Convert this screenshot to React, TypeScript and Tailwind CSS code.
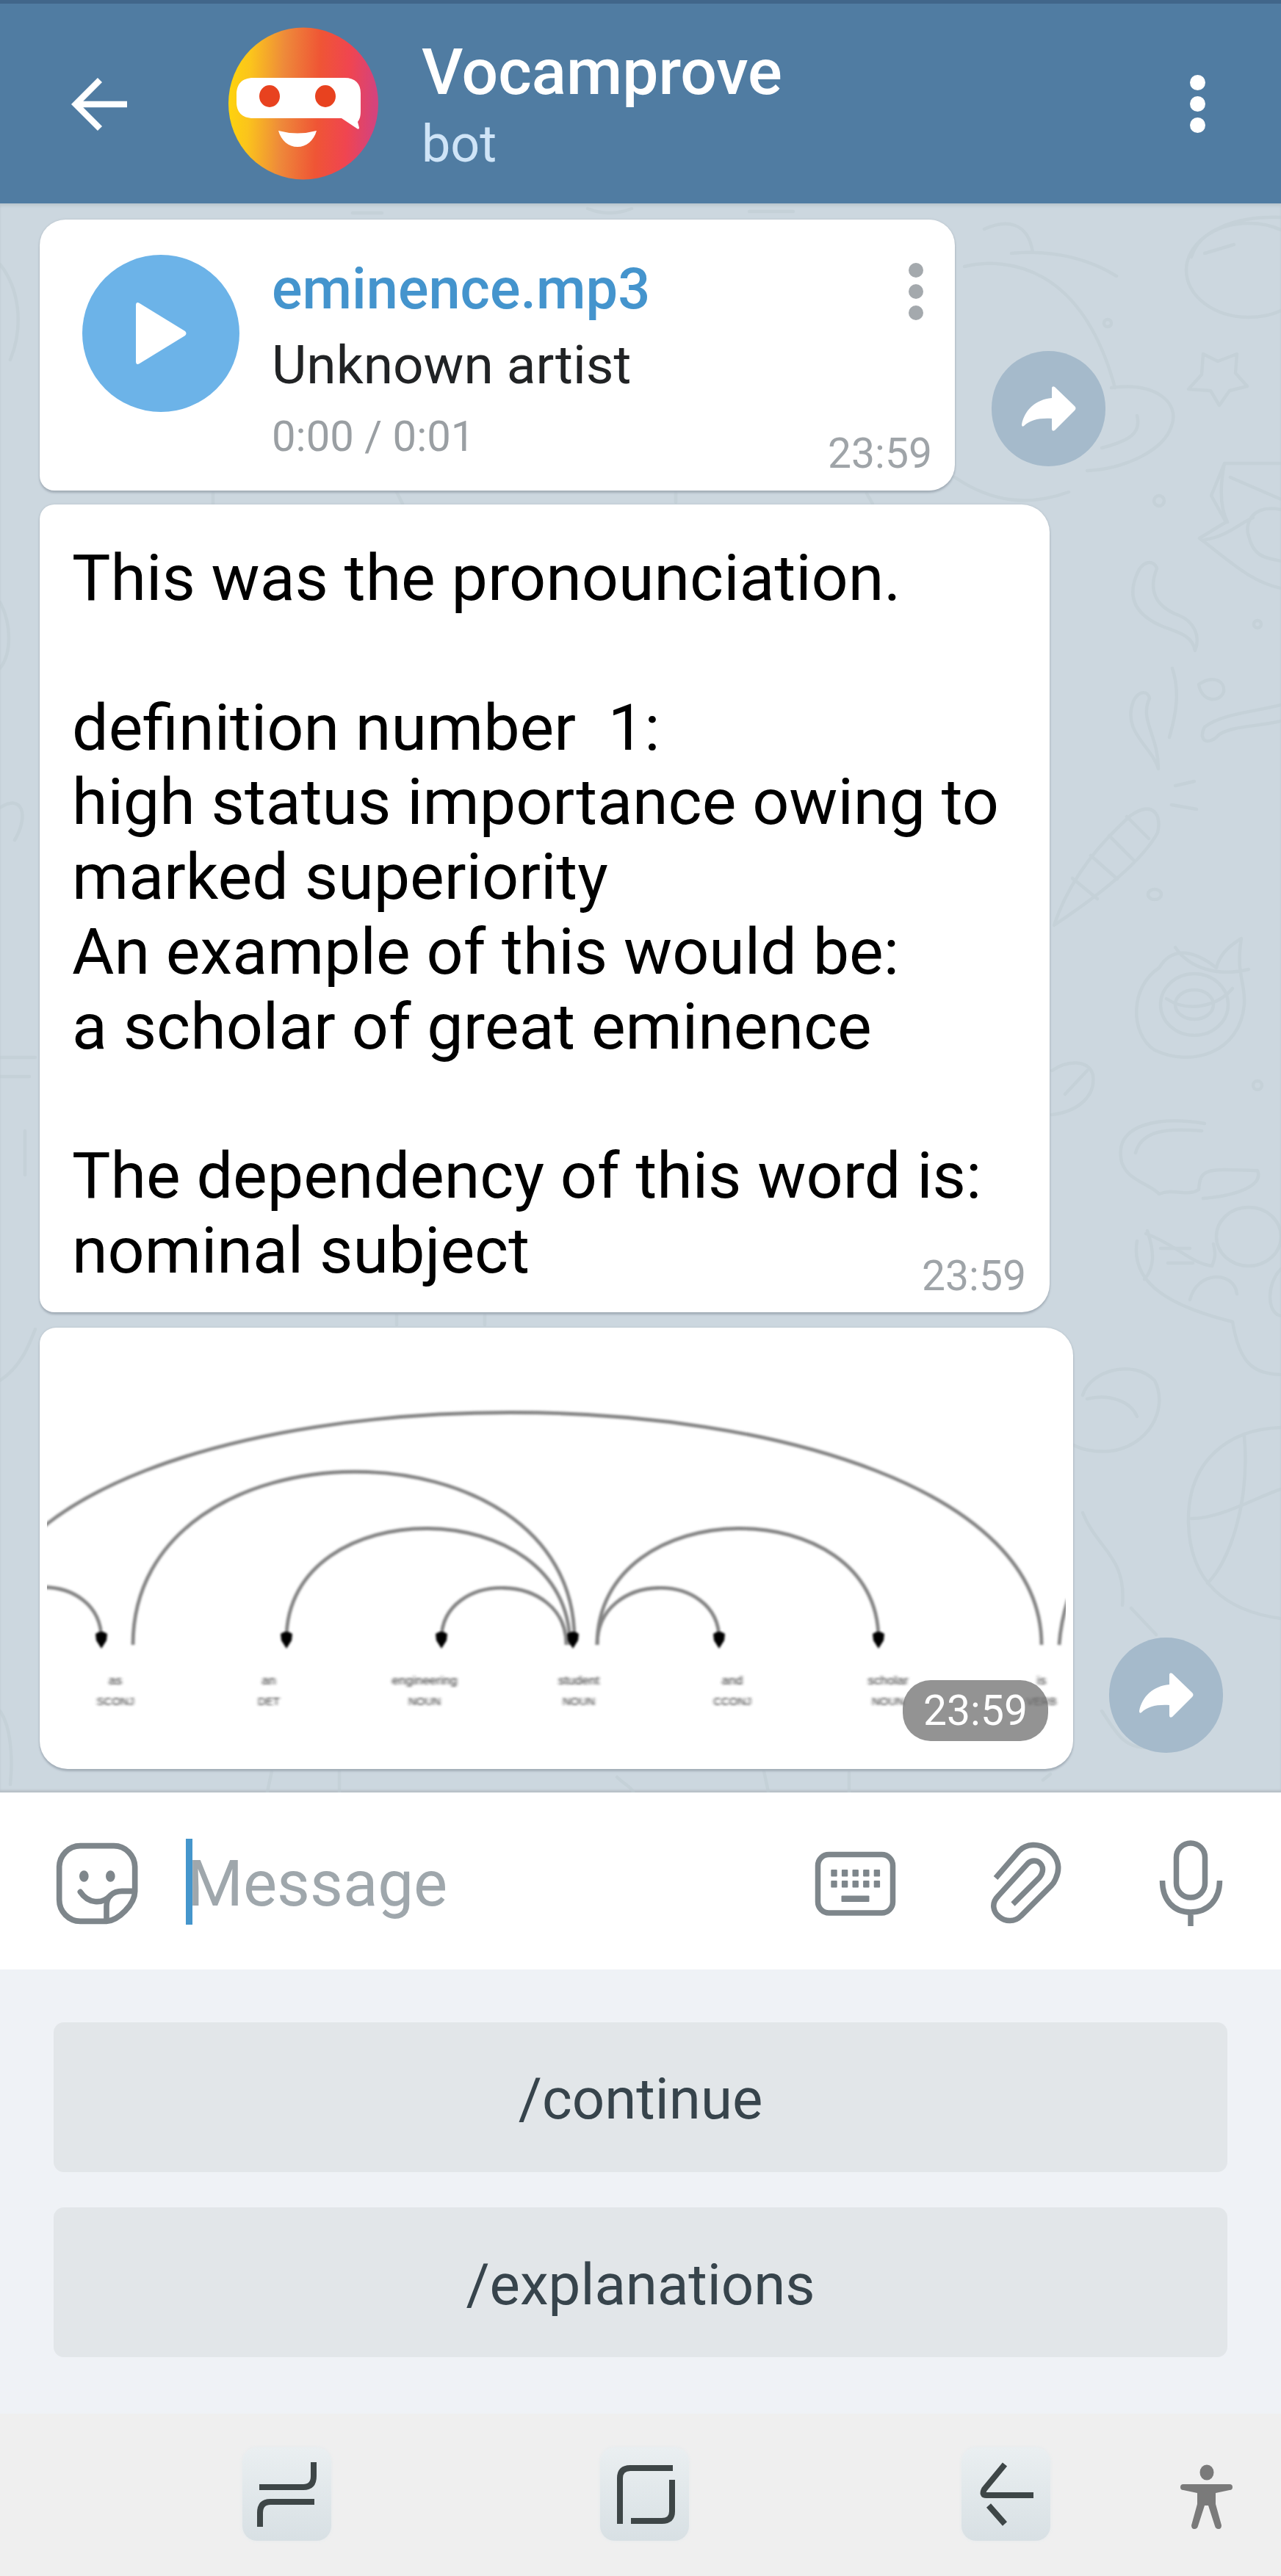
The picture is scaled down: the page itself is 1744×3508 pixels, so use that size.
import React from "react";

const definitionLines = [
  "This was the pronounciation.",
  "",
  "definition number  1:",
  "high status importance owing to",
  "marked superiority",
  "An example of this would be:",
  "a scholar of great eminence",
  "",
  "The dependency of this word is:",
  "nominal subject",
];

const words = [
  { x: 157, word: "as", tag: "SCONJ" },
  { x: 366, word: "an", tag: "DET" },
  { x: 578, word: "engineering", tag: "NOUN" },
  { x: 788, word: "student", tag: "NOUN" },
  { x: 997, word: "and", tag: "CCONJ" },
  { x: 1209, word: "scholar", tag: "NOUN" },
  { x: 1418, word: "is", tag: "VERB" },
];

const arrowHeads = [138, 390, 601, 780, 979, 1196];

function BackIcon() {
  return (
    <svg className="h-[80px] w-[84px]" viewBox="0 0 84 80" fill="none" stroke="#fff" strokeWidth="8.5">
      <path d="M42 7 9 40l33 33M10 40h69" />
    </svg>
  );
}

function Avatar() {
  return (
    <svg className="h-[208px] w-[206px]" viewBox="0 0 206 208">
      <defs>
        <linearGradient id="face" x1="0" x2="1" y1="0" y2="0.05">
          <stop offset="0" stopColor="#ffd60a" />
          <stop offset="0.16" stopColor="#fbc41c" />
          <stop offset="0.38" stopColor="#ee8a3a" />
          <stop offset="0.62" stopColor="#ef5535" />
          <stop offset="0.82" stopColor="#f04550" />
          <stop offset="1" stopColor="#d5437c" />
        </linearGradient>
      </defs>
      <ellipse cx="103" cy="104" rx="102" ry="103.5" fill="url(#face)" />
      <path
        d="M35 69h124c15 0 22 8 22 21v24c0 7-1 11-4 15l2 8c0 2-2 2-3 1l-21-14H35c-16 0-23-9-23-22V92c0-14 7-23 23-23Z"
        fill="#fff"
      />
      <ellipse cx="57" cy="94" rx="14" ry="15" fill="#e8421f" />
      <ellipse cx="133" cy="94" rx="14" ry="15" fill="#e8421f" />
      <path d="M69 141q26 7 52 0c-4 14-14 22-26 22s-22-8-26-22Z" fill="#fff" />
    </svg>
  );
}

function ForwardButton() {
  return (
    <button className="flex h-[157px] w-[155px] shrink-0 items-center justify-center rounded-full bg-[#a5bacb]">
      <svg className="h-[62px] w-[74px]" viewBox="0 0 74 62">
        <path
          d="M41 2q1-3 4-1l27 26q3 3 0 6L45 60q-4 2-4-2V44C24 43 11 46 3 54q-3 2-3-2C4 32 19 18 41 16Z"
          fill="#fff"
        />
      </svg>
    </button>
  );
}

function Wallpaper() {
  return (
    <svg
      className="absolute inset-0 h-full w-full"
      viewBox="0 277 1744 2164"
      fill="none"
      stroke="#bfccd2"
      strokeWidth="4.5"
      strokeLinecap="round"
      strokeLinejoin="round"
      opacity="0.52"
    >
      {/* Saucer with its ring */}
      <path d="M1313 363c60-14 160 0 205 165M1377 345c60-6 110 10 143 31M1340 312c30-14 60-10 66 32M1513 528c60-8 94 20 82 52-10 32-60 58-115 61M1500 610c38-10 54-20 48-44M1300 650c50 34 100 40 155 20" />
      {/* Balloon */}
      <ellipse cx="1700" cy="368" rx="85" ry="64" />
      <path d="M1622 350c10-36 60-56 122-54M1640 345l40-12" />
      <path d="m1638 482 20 10 26-10-2 26 16 18-24 6-14 20-12-20-30-2 18-20Z" />
      <circle cx="1508" cy="440" r="5" />
      <circle cx="1578" cy="682" r="7" />
      {/* Rocket */}
      <path d="M1744 631h-77l-18 44 20 36-36 22c40 30 70 60 111 68M1675 650l69 30M1667 631c-6 30-6 60 4 80M1744 694c-40-8-50 20-44 36 6 26 20 30 44 34M1640 735c30-4 50-24 66-30" />
      {/* Streamers */}
      <path d="M1547 784c8-22 24-22 28-10-12 30-2 52 30 64 20 8 30 28 22 48-4-20-20-24-42-32-40-16-50-40-38-70Z" />
      <path d="M1543 955c8-16 20-14 22-4-14 30 12 50 12 96-8-30-50-50-34-92Z" />
      <path d="M1596 910c10 30 6 60-4 94M1632 932c20-14 36-4 34 10-6 16-30 14-34-10ZM1744 960c-40 10-80 12-104 30-10 20 6 26 20 10 20-12 50-10 84-18" />
      <circle cx="1712" cy="850" r="5" />
      {/* Candy cane */}
      <path d="M1435 1260c20-60 60-110 105-150 30-20 42 0 36 24-22 40-84 88-141 126ZM1460 1196l34 28M1485 1165l36 32M1510 1138l34 34M1534 1112l30 30M1595 1096l34 6M1600 1070l26-6" />
      <ellipse cx="1572" cy="1218" rx="9" ry="7" />
      {/* Cupcake */}
      <path d="M1578 1318c-40 26-40 90-6 112 50 24 116 4 122-62 2-30-12-42-4-90-20 12-30 24-34 40-30-24-60-30-78 0ZM1600 1290c20 30 60 40 100 30M1588 1360c30 20 70 10 90-14" />
      <ellipse cx="1626" cy="1368" rx="26" ry="20" />
      <ellipse cx="1626" cy="1368" rx="46" ry="42" />
      <path d="M1432 1458c20-14 50-16 56 6 4 30-22 50-56 54M1450 1490l30-32" />
      <circle cx="1712" cy="1478" r="6" />
      {/* Elephant */}
      <path d="M1640 1530c-60-10-120 0-114 46 2 30 40 36 52 50 20-8 40 4 54-6 2-30 10-28 80-26 8 20-26 34-74 38M1546 1570c8-30 40-34 90-30" />
      <path d="M1548 1690c-10 60 50 90 130 110 10 60 30 70 66 72M1562 1676c10 30 10 50-4 66M1560 1680c40 14 60 40 90 44 6-14 4-20 2-30M1620 1770c10-40 60-40 64-8M1744 1728c-20 20-20 60 0 64" />
      <ellipse cx="1700" cy="1684" rx="44" ry="40" />
      <path d="M1580 1700h40M1590 1720h34" />
      {/* Ball */}
      <path d="M1474 1900c10-34 70-50 98-20 20 40-10 90-60 96-20 2-40-2-50-8M1480 1905c30-8 60 4 68 24" />
      <path d="M1744 1944c-70 2-128 44-126 130 2 80 50 120 126 130M1694 1956c8 90-20 170-50 200M1622 2068c40 0 90-30 122-40" />
      <path d="M1474 2060c20 50 60 60 54 126M1540 2190l34 36M1500 2330c20 30 30 50 60 50" />
      {/* Left margin */}
      <path d="M0 360c24 30 34 80 14 130M0 820c16 30 16 70 0 90M0 1100c30-20 40 10 20 44M0 1440h48M0 1466h40M34 1540v60M0 1880c30-20 40-50 48-70M0 2330c14 20 18 60 14 100" />
      {/* Gaps between the bubbles */}
      <path d="M290 670v16M540 670l8 16M920 670v14M1180 672l8 14M540 1790v14M660 1790v14M370 2412l-6 28M462 2412v28M840 2420c10 10 20 14 22 20M1040 2412l6 28M1156 2414v26M1420 2424l10-8" />
      <path d="M480 290h40M800 284c20 8 40 8 60 0M1020 288h60" />
    </svg>
  );
}

function DependencyChart() {
  return (
    <svg className="h-[601px] w-[1387px]" viewBox="64 1808 1387 601" fill="none">
      <defs>
        <filter id="soft" x="-5%" y="-5%" width="110%" height="110%">
          <feGaussianBlur stdDeviation="1.4" />
        </filter>
        <filter id="softText" x="-5%" y="-50%" width="110%" height="200%">
          <feGaussianBlur stdDeviation="2.2 1.8" />
        </filter>
      </defs>
      <g stroke="#838383" strokeWidth="4.8" filter="url(#soft)">
        <path d="M-28 2240C-28 1818 1418 1818 1418 2240" />
        <path d="M181 2240C181 1927 782 1927 782 2232" />
        <path d="M390 2232C390 2030 776 2030 776 2240" />
        <path d="M601 2232C601 2138 771 2138 771 2240" />
        <path d="M813 2240C813 2138 979 2138 979 2232" />
        <path d="M813 2240C813 2030 1196 2030 1196 2232" />
        <path d="M-20 2232C-20 2138 138 2138 138 2232" />
        <path d="M1442 2240q2-30 12-62" />
      </g>
      <g fill="#000" filter="url(#soft)">
        {arrowHeads.map((x) => (
          <path key={x} d={`M${x - 8} 2225q8-6 16 0l-1 9-7 11-7-11Z`} />
        ))}
      </g>
      <g
        fill="#2e2e2e"
        fontFamily="Liberation Sans"
        textAnchor="middle"
        filter="url(#softText)"
      >
        {words.map((w) => (
          <React.Fragment key={w.x}>
            <text x={w.x} y="2294" fontSize="17">
              {w.word}
            </text>
            <text x={w.x} y="2322" fontSize="15">
              {w.tag}
            </text>
          </React.Fragment>
        ))}
      </g>
    </svg>
  );
}

function StickerIcon() {
  return (
    <svg className="h-[114px] w-[115px]" viewBox="102 85 345 342" fill="none" stroke="#7e868b" strokeWidth="23">
      <path d="M428 288V190a86 88 0 0 0-86-88H205a86 88 0 0 0-86 88v132a86 88 0 0 0 86 88h107C360 408 428 340 428 288Z" />
      <path d="M312 408v-60c0-40 28-61 63-61h53" />
      <path d="M205 290c32 48 88 52 122 16" strokeLinecap="round" />
      <ellipse cx="220" cy="226" rx="19" ry="23" fill="#7e868b" stroke="none" />
      <ellipse cx="328" cy="226" rx="19" ry="23" fill="#7e868b" stroke="none" />
    </svg>
  );
}

function KeyboardIcon() {
  return (
    <svg className="h-[88px] w-[111px]" viewBox="1109.5 2521 111 88">
      <rect x="1114" y="2525.5" width="102" height="79.5" rx="15" fill="none" stroke="#7e868b" strokeWidth="7.5" />
      <g fill="#7e868b">
        {[1136, 1150.6, 1165.2, 1179.8, 1194.4].map((x) => (
          <React.Fragment key={x}>
            <rect x={x - 4.2} y="2546" width="8.4" height="9.5" rx="1" />
            <rect x={x - 4.2} y="2561" width="8.4" height="9.5" rx="1" />
          </React.Fragment>
        ))}
        <rect x="1146" y="2581.5" width="38" height="8.5" rx="1" />
      </g>
    </svg>
  );
}

function PaperclipIcon() {
  return (
    <svg
      className="h-[114px] w-[97px]"
      viewBox="1349 2508 97 114"
      fill="none"
      stroke="#7e868b"
      strokeWidth="7.5"
    >
      <path d="M1356.5 2557.5 1388 2521C1409 2499 1455 2523 1438 2559Q1436 2564 1432 2568L1391 2609C1373 2628 1340 2602 1360 2582L1400 2538C1411 2527 1429 2541 1416 2557L1380 2593" />
    </svg>
  );
}

function MicIcon() {
  return (
    <svg className="h-[118px] w-[87px]" viewBox="1578 2506 87 118" fill="none" stroke="#7e868b" strokeWidth="7.5">
      <rect x="1601.5" y="2510" width="39" height="74" rx="19.5" />
      <path d="M1582.5 2561C1582.5 2588 1598 2604 1621 2604S1660.5 2588 1660.5 2561M1621 2604v19" />
    </svg>
  );
}

function NavTile({ children }: { children: React.ReactNode }) {
  return (
    <div className="flex h-[127px] w-[121px] items-center justify-center rounded-[20px] bg-linear-to-b from-[#eaeff1] to-[#d8e0e4] shadow-[0_0_5px_#e4eaed]">
      <svg className="h-[127px] w-[121px]" viewBox="0 0 121 127" fill="none" stroke="#3e4647" strokeWidth="8">
        {children}
      </svg>
    </div>
  );
}

export default function App() {
  return (
    <div className="flex h-[3508px] w-[1744px] flex-col overflow-hidden bg-[#efefef] font-[Roboto,sans-serif]">
      <header className="flex h-[277px] shrink-0 border-t-[5px] border-[#41668a] bg-[#507ca2]">
        <div className="mt-[97px] ml-[94px]">
          <BackIcon />
        </div>
        <div className="mt-[32px] ml-[132px]">
          <Avatar />
        </div>
        <div className="ml-[58px] flex flex-col pt-[43px]">
          <h1 className="text-[87.5px] leading-[100px] font-medium text-white">Vocamprove</h1>
          <p className="mt-[8px] text-[70px] leading-[80px] text-[#cfe4f7]">bot</p>
        </div>
        <div className="mt-[97px] mr-[103px] ml-auto flex flex-col gap-[8px]">
          <i className="size-[21px] rounded-full bg-white" />
          <i className="size-[21px] rounded-full bg-white" />
          <i className="size-[21px] rounded-full bg-white" />
        </div>
      </header>

      <main className="relative flex h-[2164px] shrink-0 flex-col bg-[#ccd7df] pt-[22px] pl-[54px] shadow-[inset_0_5px_4px_-2px_#b9c5cd,inset_0_-4px_3px_-1px_#b7bfc6]">
        <Wallpaper />

        <div className="relative flex items-end">
          <article className="flex h-[369px] w-[1246px] rounded-[35px] rounded-bl-[20px] bg-white shadow-[0_3px_3px_#a3aeb8,0_0_3px_#b3bec7]">
            <button className="mt-[48px] ml-[58px] flex size-[214px] shrink-0 items-center justify-center rounded-full bg-[#6cb3e8]">
              <svg className="h-[86px] w-[72px]" viewBox="0 0 72 86">
                <path d="M2 5q0-6 5-3l62 38q3 3 0 6L7 84q-5 3-5-3Z" fill="#fff" />
              </svg>
            </button>
            <div className="ml-[44px] flex flex-col pt-[50px]">
              <h2 className="text-[77.5px] leading-[90px] font-medium text-[#4494cd]">eminence.mp3</h2>
              <p className="mt-[13px] text-[73px] leading-[90px] text-[#212325]">Unknown artist</p>
              <p className="mt-[17px] text-[58px] leading-[70px] text-[#9a9fa3]">0:00 / 0:01</p>
            </div>
            <div className="ml-auto flex flex-col items-end">
              <div className="mt-[59px] mr-[43px] flex flex-col gap-[9px]">
                <i className="size-[20px] rounded-full bg-[#a4a9ad]" />
                <i className="size-[20px] rounded-full bg-[#a4a9ad]" />
                <i className="size-[20px] rounded-full bg-[#a4a9ad]" />
              </div>
              <time className="mt-auto mr-[31px] mb-[15px] text-[57px] leading-[70px] text-[#9fa4a8]">23:59</time>
            </div>
          </article>
          <div className="mb-[33px] ml-[50px]">
            <ForwardButton />
          </div>
        </div>

        <article className="relative mt-[19px] flex h-[1100px] w-[1375px] justify-between rounded-[38px] rounded-l-[20px] bg-white pt-[49px] pl-[44px] shadow-[0_3px_3px_#a3aeb8,0_0_3px_#b3bec7]">
          <div className="text-[88px] leading-[101.8px] whitespace-pre text-black">
            {definitionLines.map((line, i) => (
              <p key={i} className="h-[101.8px] w-[1100px]">
                {line}
              </p>
            ))}
          </div>
          <time className="mr-[32px] mb-[14px] self-end text-[57px] leading-[70px] text-[#9fa4a8]">23:59</time>
        </article>

        <div className="relative mt-[21px] flex items-end">
          <article className="relative flex h-[601px] w-[1407px] justify-center rounded-[38px] rounded-tl-[22px] bg-white shadow-[0_3px_3px_#a3aeb8,0_0_3px_#b3bec7]">
            <DependencyChart />
            <time className="absolute right-[34px] bottom-[38px] h-[83px] w-[198px] rounded-[38px] bg-[#6f6f6f]/75 text-center text-[57px] leading-[83px] text-white">
              23:59
            </time>
          </article>
          <div className="mb-[22px] ml-[49px]">
            <ForwardButton />
          </div>
        </div>
      </main>

      <section className="flex h-[241px] shrink-0 items-center bg-white pt-[7px] pr-[79px] pl-[75px]">
        <StickerIcon />
        <div className="relative ml-[65px] text-[87px] leading-[117px] text-[#9fa7ac]">
          Message
          <i className="absolute top-[-3px] left-[-2px] h-[117px] w-[9px] bg-[#4596cc]" />
        </div>
        <div className="ml-auto flex items-center">
          <KeyboardIcon />
          <div className="ml-[128px]">
            <PaperclipIcon />
          </div>
          <div className="ml-[133px]">
            <MicIcon />
          </div>
        </div>
      </section>

      <section className="flex h-[605px] shrink-0 flex-col gap-[48px] bg-[#eff2f6] px-[73px] pt-[72px]">
        <button className="h-[204px] rounded-[14px] bg-[#e2e6e9] pt-[5px] text-[78px] text-[#37444c]">
          /continue
        </button>
        <button className="h-[204px] rounded-[14px] bg-[#e2e6e9] pt-[7px] text-[78px] text-[#37444c]">
          /explanations
        </button>
      </section>

      <nav className="flex h-[221px] items-start bg-[#efefef] pt-[46px] pl-[330px]">
        <NavTile>
          <path d="M97 20v19q0 15-14 15H23M24 108V89q0-15 14-15h60" />
        </NavTile>
        <div className="ml-[366px]">
          <NavTile>
            <path d="M99 28H41q-14 0-14 14v62M98 44v43q0 13-14 13H42" />
          </NavTile>
        </div>
        <div className="ml-[371px]">
          <NavTile>
            <path d="M59 23 31 57q-4 8 3 8h64M37 79l22 25" />
          </NavTile>
        </div>
        <svg className="mt-[23px] ml-[177px] h-[88px] w-[71px]" viewBox="0 0 71 88" fill="#7a7a7a">
          <ellipse cx="36" cy="11" rx="9.5" ry="10.5" />
          <path d="M4 27h63q4 0 4 4t-4 4l-19 4v15l8 29q0 5-4 5t-5-4l-9-28h-5l-9 28q-1 4-5 4t-4-5l8-29V39L4 35q-4 0-4-4t4-4Z" />
        </svg>
      </nav>
    </div>
  );
}
